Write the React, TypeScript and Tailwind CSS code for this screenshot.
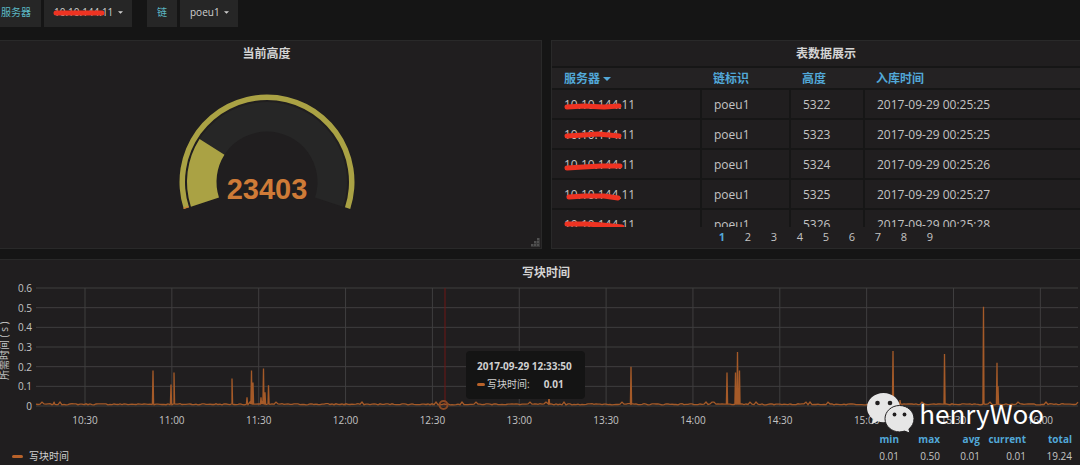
import React, { useState } from 'react';

// ---------------------------------------------------------------------------
// Data
// ---------------------------------------------------------------------------

interface BlockRow {
  server: string;
  chain: string;
  height: number;
  time: string;
  strike: string;
}

const SERVER = '10.10.144.11';

const ROWS: BlockRow[] = [
  { server: SERVER, chain: 'poeu1', height: 5322, time: '2017-09-29 00:25:25', strike: 'M3 7 L20 6 L40 7 L55 6' },
  { server: SERVER, chain: 'poeu1', height: 5323, time: '2017-09-29 00:25:25', strike: 'M3 6 L20 5 L34 4 L55 6' },
  { server: SERVER, chain: 'poeu1', height: 5324, time: '2017-09-29 00:25:26', strike: 'M3 8 L19 7 L37 6 L56 6' },
  { server: SERVER, chain: 'poeu1', height: 5325, time: '2017-09-29 00:25:27', strike: 'M5 7 L20 6 L40 6 L54 8' },
  { server: SERVER, chain: 'poeu1', height: 5326, time: '2017-09-29 00:25:28', strike: 'M3 4 L22 4 L38 5 L58 7' },
];

const PAGES = [1, 2, 3, 4, 5, 6, 7, 8, 9];

const Y_TICKS = ['0.6', '0.5', '0.4', '0.3', '0.2', '0.1', '0'];

const X_TICKS = [
  '10:30', '11:00', '11:30', '12:00', '12:30', '13:00',
  '13:30', '14:00', '14:30', '15:00', '15:30', '16:00',
];

const STATS = [
  { label: 'min', value: '0.01', width: 'w-[41px]' },
  { label: 'max', value: '0.50', width: 'w-[41px]' },
  { label: 'avg', value: '0.01', width: 'w-[40px]' },
  { label: 'current', value: '0.01', width: 'w-[46px]' },
  { label: 'total', value: '19.24', width: 'w-[46px]' },
];

// Plot units: 1042 wide, 118 high (0 .. 0.6 s)
const PLOT_W = 1042;
const PLOT_H = 118;
const FIRST_TICK = 49;
const TICK_STEP = 86.85;

// [x, seconds]
const SPIKES: [number, number][] = [
  [18, 0.022], [117, 0.18], [135, 0.11], [138, 0.17], [196, 0.14], [211, 0.045],
  [215.5, 0.18], [217, 0.12], [225, 0.045], [227.5, 0.19], [229, 0.07], [232.5, 0.105],
  [513, 0.05], [595, 0.2], [691, 0.17], [699.5, 0.17], [701.5, 0.275], [703.5, 0.18],
  [857, 0.28], [864, 0.03], [908.5, 0.265], [947.5, 0.505], [961, 0.22], [962, 0.1],
];

// ---------------------------------------------------------------------------
// Helpers
// ---------------------------------------------------------------------------

function toY(seconds: number): number {
  return PLOT_H - (seconds / 0.6) * PLOT_H;
}

function buildSeries(): string {
  const points: [number, number][] = [];
  let seed = 7;
  for (let x = 0; x <= PLOT_W; x += 2) {
    seed = (seed * 1103515245 + 12345) % 2147483648;
    const r = seed / 2147483648;
    points.push([x, r > 0.94 ? 0.02 : 0.006 + r * 0.006]);
  }
  SPIKES.forEach(([x, v]) => {
    points.push([x - 0.6, 0.01], [x, v], [x + 0.6, 0.01]);
  });
  points.sort((a, b) => a[0] - b[0]);
  return points.map(([x, v]) => `${x.toFixed(1)},${toY(v).toFixed(1)}`).join(' ');
}

function polar(radius: number, degrees: number): string {
  const a = (degrees * Math.PI) / 180;
  return `${(88 + radius * Math.cos(a)).toFixed(2)} ${(88 + radius * Math.sin(a)).toFixed(2)}`;
}

// Ring segment, clockwise from one angle to the other
function segment(outer: number, inner: number, from: number, to: number): string {
  const large = to - from > 180 ? 1 : 0;
  return [
    `M${polar(outer, from)}`,
    `A${outer} ${outer} 0 ${large} 1 ${polar(outer, to)}`,
    `L${polar(inner, to)}`,
    `A${inner} ${inner} 0 ${large} 0 ${polar(inner, from)}Z`,
  ].join(' ');
}

const series = buildSeries();

// ---------------------------------------------------------------------------
// Components
// ---------------------------------------------------------------------------

const Caret: React.FC<{ className?: string }> = ({ className }) => (
  <svg viewBox="0 0 8 4" className={className} aria-hidden="true">
    <path d="M0 0h8L4 4z" fill="currentColor" />
  </svg>
);

const Strike: React.FC<{ d: string; className: string }> = ({ d, className }) => (
  <svg width="62" height="12" viewBox="0 0 62 12" className={className} aria-hidden="true">
    <path d={d} fill="none" stroke="#ee3322" strokeWidth="5" strokeLinecap="round" strokeLinejoin="round" />
  </svg>
);

interface VariableProps {
  id: string;
  label: string;
  value: string;
  strike?: string;
  labelClass: string;
}

const Variable: React.FC<VariableProps> = ({ id, label, value, strike, labelClass }) => (
  <div className="flex gap-[3px]">
    <label htmlFor={id} className={`flex items-center bg-[#262626] pb-0.5 text-[#5cb8c4] ${labelClass}`}>
      {label}
    </label>
    <div className="relative flex items-center gap-1 bg-[#262626] px-[9px] pb-0.5">
      <select id={id} defaultValue={value} className="appearance-none bg-transparent pl-px text-[#d0d0d0] outline-none">
        <option>{value}</option>
      </select>
      <Caret className="pointer-events-none h-[3px] w-[5px] text-[#d0d0d0]" />
      {strike && <Strike d={strike} className="pointer-events-none absolute top-[7px] left-2" />}
    </div>
  </div>
);

const Gauge: React.FC = () => (
  <svg width="176" height="118" viewBox="0 0 176 118" role="img" aria-label="23403">
    <path d={segment(80, 50.5, 162, 378)} fill="#262626" />
    <path d={segment(80, 50.5, 162, 212.55)} fill="#aaa244" />
    <path d={segment(87.5, 82, 162, 378)} fill="#aaa244" />
    <path d={segment(87.5, 82, 162, 162.8)} fill="#cc7a38" />
    <text x="88" y="105" textAnchor="middle" className="fill-[#cf7b37] font-['Liberation_Sans',sans-serif] text-[29px] font-bold">
      23403
    </text>
  </svg>
);

const BlockTable: React.FC = () => {
  const [page, setPage] = useState(1);
  return (
    <>
      <div className="h-[161px] overflow-hidden">
        <table className="w-full table-fixed border-collapse text-left text-xs">
          <thead>
            <tr className="h-[22px] border-y-2 border-[#161616] bg-[#242223] leading-[18px] text-[#52a8d8]">
              <th className="w-[149px] pt-0.5 pl-3 font-bold">
                <button className="flex items-center gap-[3px] font-bold">
                  服务器
                  <Caret className="h-[4px] w-[8px]" />
                </button>
              </th>
              <th className="w-[89px] pt-0.5 pl-3 font-bold">链标识</th>
              <th className="w-[74px] pt-0.5 pl-3 font-bold">高度</th>
              <th className="pt-0.5 pl-3 font-bold">入库时间</th>
            </tr>
          </thead>
          <tbody className="text-[#c4c4c4]">
            {ROWS.map((row) => (
              <tr key={row.height} className="h-[30px] border-b-2 border-[#161616]">
                <td className="relative border-r-2 border-[#161616] pt-0.5 pl-3">
                  {row.server}
                  <Strike d={row.strike} className="absolute top-[10px] left-3" />
                </td>
                <td className="border-r-2 border-[#161616] pt-0.5 pl-3">{row.chain}</td>
                <td className="border-r-2 border-[#161616] pt-0.5 pl-3">{row.height}</td>
                <td className="pt-0.5 pl-3">{row.time}</td>
              </tr>
            ))}
          </tbody>
        </table>
      </div>
      <nav className="flex justify-center pt-0.5 pl-5 text-[11px]">
        {PAGES.map((p) => (
          <button
            key={p}
            onClick={() => setPage(p)}
            className={p === page ? 'w-[26px] font-bold text-[#52a8d8]' : 'w-[26px] text-[#c4c4c4]'}
          >
            {p}
          </button>
        ))}
      </nav>
    </>
  );
};

const Chart: React.FC = () => (
  <div className="relative flex h-[144px] pr-0.5">
    <div className="flex w-9 shrink-0 justify-between pr-1 text-[#c4c4c4]">
      <div className="-ml-1 h-[142px] rotate-180 text-center text-[10px] leading-4 whitespace-nowrap [text-orientation:sideways] [writing-mode:vertical-rl]">
        所需时间 ( s )
      </div>
      <div className="flex h-[134px] flex-col justify-between text-right text-[10px] leading-4">
        {Y_TICKS.map((t) => (
          <span key={t}>{t}</span>
        ))}
      </div>
    </div>
    <svg className="mt-2 h-[136px] min-w-0 flex-1 overflow-visible" role="img" aria-label="写块时间">
      <svg width="100%" height={PLOT_H} viewBox={`0 0 ${PLOT_W} ${PLOT_H}`} preserveAspectRatio="none" overflow="visible">
        <g stroke="#3f3e3f" strokeWidth="1">
          {Y_TICKS.map((t) => (
            <line key={t} x1="0" x2={PLOT_W} y1={toY(Number(t))} y2={toY(Number(t))} vectorEffect="non-scaling-stroke" />
          ))}
          {X_TICKS.map((t, i) => (
            <line
              key={t}
              x1={FIRST_TICK + i * TICK_STEP}
              x2={FIRST_TICK + i * TICK_STEP}
              y1="0"
              y2={PLOT_H}
              vectorEffect="non-scaling-stroke"
            />
          ))}
        </g>
        <line x1="409" x2="409" y1="0" y2={PLOT_H} stroke="#6d1616" vectorEffect="non-scaling-stroke" />
        <polyline points={series} fill="none" stroke="#a55a28" strokeWidth="1.3" vectorEffect="non-scaling-stroke" />
      </svg>
      <circle cx={`${(407.5 / PLOT_W) * 100}%`} cy="117" r="4" fill="none" stroke="#8a4a24" strokeWidth="2" />
      {X_TICKS.map((t, i) => (
        <text
          key={t}
          x={`${((FIRST_TICK + i * TICK_STEP) / PLOT_W) * 100}%`}
          y="136"
          textAnchor="middle"
          className="fill-[#c4c4c4] text-[10px]"
        >
          {t}
        </text>
      ))}
    </svg>
    <div className="absolute top-[71px] left-[43.15%] rounded bg-[#141414] py-1.5 pr-[13px] pl-[11px] text-[10px] leading-[18px] text-[#d0d0d0]">
      <div className="font-bold">2017-09-29 12:33:50</div>
      <div className="flex items-center">
        <span className="mr-0.5 h-[3px] w-2 rounded-sm bg-[#b8622a]" />
        写块时间:
        <span className="ml-3.5 font-bold">0.01</span>
      </div>
    </div>
  </div>
);

const Legend: React.FC = () => (
  <table className="w-full table-fixed text-right text-[10px] leading-[17px]">
    <thead>
      <tr className="text-[#52a8d8]">
        <td />
        {STATS.map((s) => (
          <th key={s.label} className={`${s.width} font-bold`}>{s.label}</th>
        ))}
        <td className="w-2" />
      </tr>
    </thead>
    <tbody className="text-[#c4c4c4]">
      <tr>
        <th className="pl-3 font-normal text-[#d0d0d0]">
          <button className="flex items-center gap-1.5">
            <span className="h-[3px] w-[11px] rounded-sm bg-[#b8622a]" />
            写块时间
          </button>
        </th>
        {STATS.map((s) => (
          <td key={s.label}>{s.value}</td>
        ))}
        <td />
      </tr>
    </tbody>
  </table>
);

const Watermark: React.FC = () => (
  <div className="pointer-events-none absolute right-[36px] bottom-[32px] flex items-center gap-1">
    <svg width="48" height="40" viewBox="0 0 48 40" aria-hidden="true">
      <path
        d="M16.5 0C7.4 0 0 6.5 0 14.7c0 4.6 2.4 8.6 6.2 11.3L4.800 31.3l5.700-3c2 .6 4 .9 6 .9 9.100 0 16.500-6.500 16.500-14.600S25.600 0 16.500 0z"
        fill="#e6e6e6"
      />
      <path
        d="M32.500 12.500c-8 0-14.500 5.900-14.500 13.200s6.500 13.200 14.500 13.200c1.700 0 3.400-.3 5-.8l5.400 2-1-4.200c3.100-2.400 5.100-6 5.100-10.200 0-7.300-6.500-13.200-14.500-13.200z"
        fill="#e6e6e6"
        stroke="#201e1f"
        strokeWidth="1"
      />
      <g fill="#201e1f">
        <circle cx="10.5" cy="10" r="2.3" />
        <circle cx="23" cy="10" r="2.3" />
        <circle cx="27.5" cy="21.5" r="1.9" />
        <circle cx="37.5" cy="21.5" r="1.9" />
      </g>
    </svg>
    <span className="font-['Noto_Sans_CJK_SC',sans-serif] text-[26px] leading-10 text-white">henryWoo</span>
  </div>
);

interface PanelProps {
  title: string;
  titleClass: string;
  className: string;
  children: React.ReactNode;
}

const Panel: React.FC<PanelProps> = ({ title, titleClass, className, children }) => (
  <section className={`relative border-[#292929] bg-[#201e1f] ${className}`}>
    <h2 className={`pt-px text-center text-xs leading-6 font-bold text-[#d4d4d4] ${titleClass}`}>{title}</h2>
    {children}
  </section>
);

const App: React.FC = () => (
  <main className="overflow-hidden bg-[#151515] font-['Open_Sans','Noto_Sans_CJK_SC',sans-serif]">
    <header className="flex h-[27px] gap-[15px] text-[10px]">
      <Variable id="server" label="服务器" value={SERVER} strike="M4 6 L20 6 L40 6 L50 6" labelClass="pr-2.5 pl-px" />
      <Variable id="chain" label="链" value="poeu1" labelClass="px-2.5" />
    </header>

    <div className="mt-[13px] grid grid-cols-[542fr_529fr] gap-[9px]">
      <Panel title="当前高度" titleClass="pr-2" className="h-[209px] border-y border-r">
        <div className="flex justify-center pt-[28px] pr-2">
          <Gauge />
        </div>
        <svg width="9" height="9" viewBox="0 0 9 9" className="absolute right-px bottom-px" aria-hidden="true">
          <path d="M6 0h3v9H0V6h3V3h3z" fill="#383838" />
          <path d="M6 0h2v2H6zM3 3h2v2H3zM6 3h2v2H6zM0 6h2v2H0zM3 6h2v2H3zM6 6h2v2H6z" fill="#505050" />
        </svg>
      </Panel>
      <Panel title="表数据展示" titleClass="pl-5" className="h-[209px] border-y border-l">
        <BlockTable />
      </Panel>
    </div>

    <Panel title="写块时间" titleClass="pl-3" className="mt-2.5 border-t">
      <div className="-mt-[5px]">
        <Chart />
      </div>
      <div className="mt-[7px]">
        <Legend />
      </div>
      <Watermark />
    </Panel>
  </main>
);

export default App;
